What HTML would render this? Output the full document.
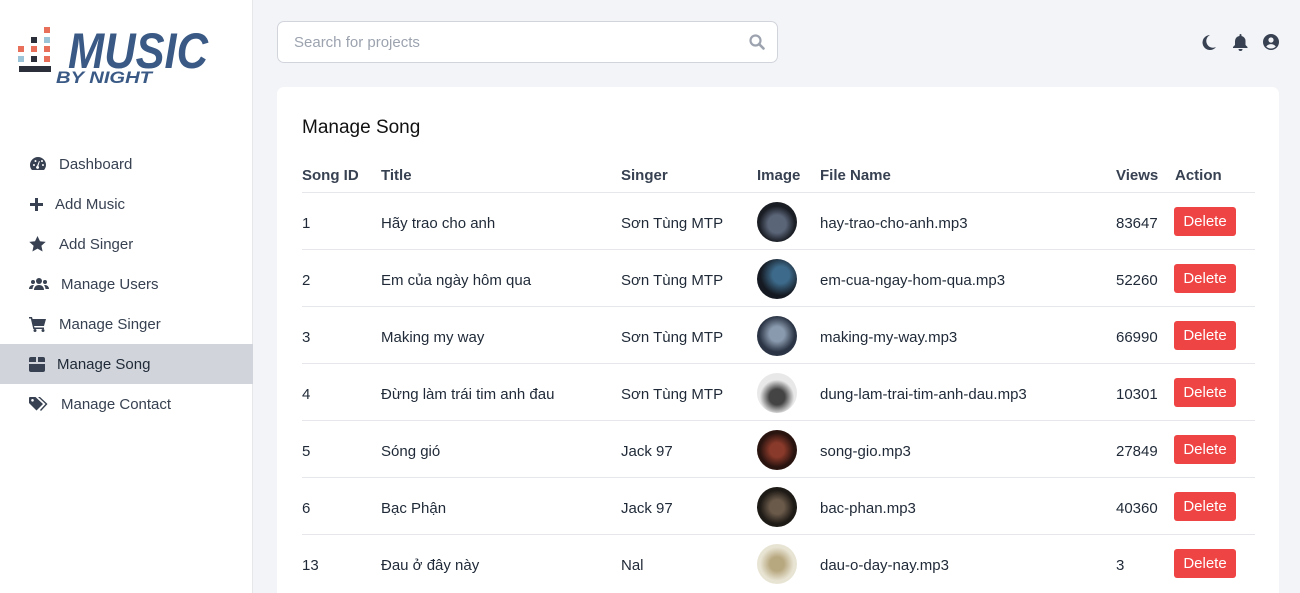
<!DOCTYPE html>
<html><head><meta charset="utf-8"><style>
*{box-sizing:border-box;margin:0;padding:0}
html,body{width:1300px;height:593px;overflow:hidden}
body{background:#f3f4f8;font-family:"Liberation Sans","DejaVu Sans",sans-serif;color:#1f2937;position:relative}
.side{position:absolute;left:0;top:0;width:253px;height:593px;background:#fff;border-right:1px solid #e5e7eb}
.nav{position:absolute;left:0;width:253px;height:40px;display:flex;align-items:center;font-size:15px;color:#374151}
.nav svg{position:absolute;left:29px;fill:#374151}
.nav.act{background:#d1d5db;color:#1f2937}
.search{position:absolute;left:277px;top:21px;width:501px;height:42px;background:#fff;border:1px solid #d1d5db;border-radius:7px;font-size:15px;color:#9ca3af;padding:12px 16px}
.card{position:absolute;left:277px;top:87px;width:1002px;height:506px;background:#fff;border-radius:7px 7px 0 0}
h2{position:absolute;left:302px;top:117px;font-size:19px;font-weight:normal;color:#111}
.c{position:absolute;font-size:15px;white-space:nowrap}
.h{font-weight:bold;color:#374151}
.line{position:absolute;left:302px;width:953px;height:1px;background:#e5e7eb}
.img{position:absolute;left:757px;width:40px;height:40px;border-radius:50%}
.del{position:absolute;left:1174px;width:62px;height:29px;background:#ef4444;color:#fff;border-radius:3px;font-size:15px;text-align:center;line-height:29px}
</style></head><body>
<div class="side">
<svg style="position:absolute;left:0;top:10px" width="230" height="85">
<rect x="44" y="17" width="6" height="6" fill="#e8705a"/>
<rect x="31" y="27" width="6" height="6" fill="#2b2f3a"/><rect x="44" y="27" width="6" height="6" fill="#9cc4d8"/>
<rect x="18" y="36" width="6" height="6" fill="#e8705a"/><rect x="31" y="36" width="6" height="6" fill="#e8705a"/><rect x="44" y="36" width="6" height="6" fill="#e8705a"/>
<rect x="18" y="46" width="6" height="6" fill="#9cc4d8"/><rect x="31" y="46" width="6" height="6" fill="#2b2f3a"/><rect x="44" y="46" width="6" height="6" fill="#e8705a"/>
<rect x="19" y="56" width="32" height="6" fill="#2b2f3a"/>
<text x="68" y="58" font-family="Liberation Sans" font-weight="bold" font-style="italic" font-size="50" fill="#3a5a85" textLength="140" lengthAdjust="spacingAndGlyphs">MUSIC</text>
<text x="56" y="73" font-family="Liberation Sans" font-style="italic" font-weight="bold" font-size="17" fill="#3a5a85" textLength="96" lengthAdjust="spacingAndGlyphs">BY NIGHT</text>
</svg>
<div class="nav" style="top:144px"><svg width="18" height="16" viewBox="0 0 18 16"><path d="M9 1a8 8 0 0 0-8 8c0 2 .7 3.8 2 5h12a8 8 0 0 0 2-5 8 8 0 0 0-8-8zm1 10a1.5 1.5 0 1 1-2-1l2-5 .8.3-1.5 4.9c.5.2.8.6.7.8zM4 9a1 1 0 1 1 0 .1zM5.5 5a1 1 0 1 1 0 .1zM13 9a1 1 0 1 1 0 .1zM12 5a1 1 0 1 1 0 .1z"/></svg><span style="margin-left:59px">Dashboard</span></div>
<div class="nav" style="top:184px"><svg width="15" height="15" viewBox="0 0 15 15"><path d="M6 1h3v5h5v3H9v5H6V9H1V6h5z"/></svg><span style="margin-left:55px">Add Music</span></div>
<div class="nav" style="top:224px"><svg width="17" height="16" viewBox="0 0 17 16"><path d="M8.5 0l2.5 5.3 5.7.6-4.3 3.9 1.2 5.7-5.1-2.9-5.1 2.9 1.2-5.7L.3 5.9 6 5.3z"/></svg><span style="margin-left:59px">Add Singer</span></div>
<div class="nav" style="top:264px"><svg width="20" height="14" viewBox="0 0 20 14"><circle cx="10" cy="4" r="3"/><circle cx="4" cy="5" r="2"/><circle cx="16" cy="5" r="2"/><path d="M5 13c0-3 2-5 5-5s5 2 5 5zM0 12c0-2 1.5-4 4-4l1 .3C4 9.5 3.5 11 3.5 12zM20 12c0-2-1.5-4-4-4l-1 .3c1 1.2 1.5 2.7 1.5 3.7z"/></svg><span style="margin-left:61px">Manage Users</span></div>
<div class="nav" style="top:304px"><svg width="18" height="16" viewBox="0 0 18 16"><path d="M0 1h3l.6 2H17l-2 7H5l.5 1.5H15V13H4.3L1.8 2.5H0z"/><circle cx="6" cy="14.5" r="1.5"/><circle cx="14" cy="14.5" r="1.5"/></svg><span style="margin-left:59px">Manage Singer</span></div>
<div class="nav act" style="top:344px"><svg width="16" height="15" viewBox="0 0 16 15"><path d="M2 0h5v5H0V2a2 2 0 0 1 2-2zM9 0h5a2 2 0 0 1 2 2v3H9zM0 7h16v6a2 2 0 0 1-2 2H2a2 2 0 0 1-2-2z"/></svg><span style="margin-left:57px">Manage Song</span></div>
<div class="nav" style="top:384px"><svg width="20" height="16" viewBox="0 0 20 16"><path d="M0 1.5V7l7.5 7.5L14 8 6.5 1H1zM3.5 3a1.3 1.3 0 1 1 0 2.6 1.3 1.3 0 0 1 0-2.6zM9 1h2l7.5 7-6.5 7-1-1 5.5-6z"/></svg><span style="margin-left:61px">Manage Contact</span></div>
</div>
<div class="search">Search for projects
<svg style="position:absolute;right:12px;top:12px" width="16" height="16" viewBox="0 0 16 16"><circle cx="6.5" cy="6.5" r="5" fill="none" stroke="#9ca3af" stroke-width="2.2"/><path d="M10 10l4.5 4.5" stroke="#9ca3af" stroke-width="2.6" stroke-linecap="round"/></svg></div>
<svg style="position:absolute;left:1201px;top:34px" width="16" height="17" viewBox="0 0 16 17"><path d="M9 1a7.5 7.5 0 1 0 6 12A6 6 0 0 1 9 1z" fill="#374151"/></svg>
<svg style="position:absolute;left:1233px;top:34px" width="15" height="17" viewBox="0 0 15 17"><path d="M7.5 0a1 1 0 0 1 1 1v1a5 5 0 0 1 4 5v4l2 2v1H0v-1l2-2V7a5 5 0 0 1 4.5-5V1a1 1 0 0 1 1-1zM5.5 15h4a2 2 0 0 1-4 0z" fill="#374151"/></svg>
<svg style="position:absolute;left:1263px;top:34px" width="16" height="16" viewBox="0 0 16 16"><circle cx="8" cy="8" r="8" fill="#374151"/><circle cx="8" cy="6" r="2.6" fill="#f3f4f8"/><path d="M3.2 12.5a6 6 0 0 1 9.6 0A6.5 6.5 0 0 1 8 14.5a6.5 6.5 0 0 1-4.8-2z" fill="#f3f4f8"/></svg>
<div class="card"></div>
<h2>Manage Song</h2>
<div class="c h" style="left:302px;top:167px">Song ID</div>
<div class="c h" style="left:381px;top:167px">Title</div>
<div class="c h" style="left:621px;top:167px">Singer</div>
<div class="c h" style="left:757px;top:167px">Image</div>
<div class="c h" style="left:820px;top:167px">File Name</div>
<div class="c h" style="left:1116px;top:167px">Views</div>
<div class="c h" style="left:1175px;top:167px">Action</div>
<div class="line" style="top:192px"></div>

<div class="c" style="left:302px;top:215px">1</div><div class="c" style="left:381px;top:215px">Hãy trao cho anh</div><div class="c" style="left:621px;top:215px">Sơn Tùng MTP</div><div class="img" style="top:202px;background:radial-gradient(circle at 50% 55%,#5a6578 0 30%,#1a1d24 60%)"></div><div class="c" style="left:820px;top:215px">hay-trao-cho-anh.mp3</div><div class="c" style="left:1116px;top:215px">83647</div><div class="del" style="top:207px">Delete</div>
<div class="line" style="top:249px"></div>
<div class="c" style="left:302px;top:272px">2</div><div class="c" style="left:381px;top:272px">Em của ngày hôm qua</div><div class="c" style="left:621px;top:272px">Sơn Tùng MTP</div><div class="img" style="top:259px;background:radial-gradient(circle at 60% 40%,#3d6a8a 0 25%,#151a22 60%)"></div><div class="c" style="left:820px;top:272px">em-cua-ngay-hom-qua.mp3</div><div class="c" style="left:1116px;top:272px">52260</div><div class="del" style="top:264px">Delete</div>
<div class="line" style="top:306px"></div>
<div class="c" style="left:302px;top:329px">3</div><div class="c" style="left:381px;top:329px">Making my way</div><div class="c" style="left:621px;top:329px">Sơn Tùng MTP</div><div class="img" style="top:316px;background:radial-gradient(circle at 50% 45%,#8a9aae 0 25%,#2a3444 60%)"></div><div class="c" style="left:820px;top:329px">making-my-way.mp3</div><div class="c" style="left:1116px;top:329px">66990</div><div class="del" style="top:321px">Delete</div>
<div class="line" style="top:363px"></div>
<div class="c" style="left:302px;top:386px">4</div><div class="c" style="left:381px;top:386px">Đừng làm trái tim anh đau</div><div class="c" style="left:621px;top:386px">Sơn Tùng MTP</div><div class="img" style="top:373px;background:radial-gradient(circle at 50% 60%,#444 0 25%,#e8e8e8 55%)"></div><div class="c" style="left:820px;top:386px">dung-lam-trai-tim-anh-dau.mp3</div><div class="c" style="left:1116px;top:386px">10301</div><div class="del" style="top:378px">Delete</div>
<div class="line" style="top:420px"></div>
<div class="c" style="left:302px;top:443px">5</div><div class="c" style="left:381px;top:443px">Sóng gió</div><div class="c" style="left:621px;top:443px">Jack 97</div><div class="img" style="top:430px;background:radial-gradient(circle at 50% 50%,#8a3a2a 0 25%,#2a1410 60%)"></div><div class="c" style="left:820px;top:443px">song-gio.mp3</div><div class="c" style="left:1116px;top:443px">27849</div><div class="del" style="top:435px">Delete</div>
<div class="line" style="top:477px"></div>
<div class="c" style="left:302px;top:500px">6</div><div class="c" style="left:381px;top:500px">Bạc Phận</div><div class="c" style="left:621px;top:500px">Jack 97</div><div class="img" style="top:487px;background:radial-gradient(circle at 50% 50%,#6a5a4a 0 25%,#1e1a16 60%)"></div><div class="c" style="left:820px;top:500px">bac-phan.mp3</div><div class="c" style="left:1116px;top:500px">40360</div><div class="del" style="top:492px">Delete</div>
<div class="line" style="top:534px"></div>
<div class="c" style="left:302px;top:557px">13</div><div class="c" style="left:381px;top:557px">Đau ở đây này</div><div class="c" style="left:621px;top:557px">Nal</div><div class="img" style="top:544px;background:radial-gradient(circle at 50% 50%,#b8a880 0 25%,#e8e4d4 60%)"></div><div class="c" style="left:820px;top:557px">dau-o-day-nay.mp3</div><div class="c" style="left:1116px;top:557px">3</div><div class="del" style="top:549px">Delete</div>
</body></html>
